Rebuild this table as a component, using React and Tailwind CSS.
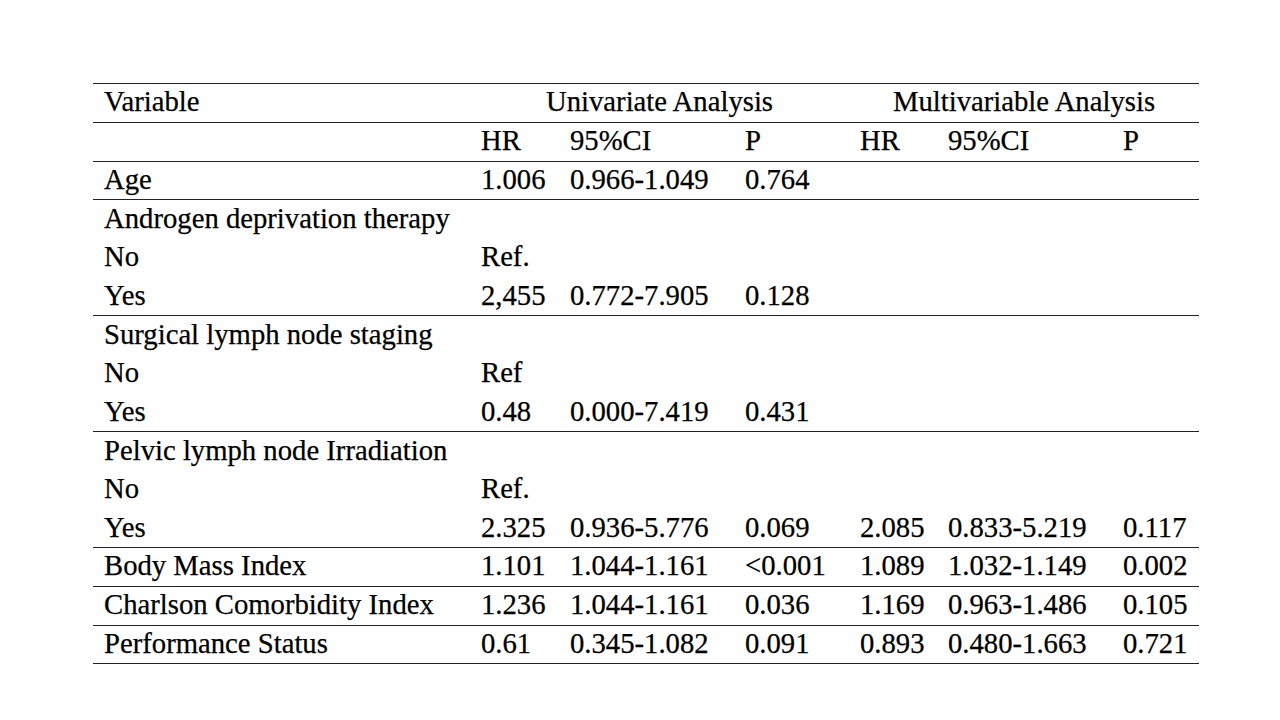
const cols = 'grid grid-cols-[377px_89px_175px_115px_88px_175px_87px]';

const rows = [
  { cells: ['Age', '1.006', '0.966-1.049', '0.764', '', '', ''], line: true },
  { cells: ['Androgen deprivation therapy', '', '', '', '', '', ''] },
  { cells: ['No', 'Ref.', '', '', '', '', ''] },
  { cells: ['Yes', '2,455', '0.772-7.905', '0.128', '', '', ''], line: true },
  { cells: ['Surgical lymph node staging', '', '', '', '', '', ''] },
  { cells: ['No', 'Ref', '', '', '', '', ''] },
  { cells: ['Yes', '0.48', '0.000-7.419', '0.431', '', '', ''], line: true },
  { cells: ['Pelvic lymph node Irradiation', '', '', '', '', '', ''] },
  { cells: ['No', 'Ref.', '', '', '', '', ''] },
  { cells: ['Yes', '2.325', '0.936-5.776', '0.069', '2.085', '0.833-5.219', '0.117'], line: true },
  { cells: ['Body Mass Index', '1.101', '1.044-1.161', '<0.001', '1.089', '1.032-1.149', '0.002'], line: true },
  { cells: ['Charlson Comorbidity Index', '1.236', '1.044-1.161', '0.036', '1.169', '0.963-1.486', '0.105'], line: true },
  { cells: ['Performance Status', '0.61', '0.345-1.082', '0.091', '0.893', '0.480-1.663', '0.721'], line: true },
];

function Row({ cells, line }) {
  return (
    <div className={`${cols} h-[38.67px] items-center ${line ? 'border-b-[1.5px] border-[#222]' : ''}`}>
      {cells.map((c, i) => (
        <div key={i} className="pl-[11px] pb-[3px] whitespace-nowrap">{c}</div>
      ))}
    </div>
  );
}

export default function App() {
  return (
    <div className="w-[1280px] h-[720px] bg-white overflow-hidden pt-[82.5px] pl-[93px]">
      <div
        className="w-[1106px] text-[28.7px] leading-none text-black [-webkit-text-stroke:0.25px_#000]"
        style={{ fontFamily: '"Liberation Serif", "Times New Roman", serif' }}
      >
        <div className={`${cols} h-[40.5px] items-center border-t-[1.5px] border-b-[1.5px] border-[#222]`}>
          <div className="pl-[11px] pb-[3px]">Variable</div>
          <div className="col-span-3 text-center pb-[3px]">Univariate Analysis</div>
          <div className="col-span-3 text-center pb-[3px]">Multivariable Analysis</div>
        </div>
        <Row cells={['', 'HR', '95%CI', 'P', 'HR', '95%CI', 'P']} line />
        {rows.map((r, i) => (
          <Row key={i} {...r} />
        ))}
      </div>
    </div>
  );
}
